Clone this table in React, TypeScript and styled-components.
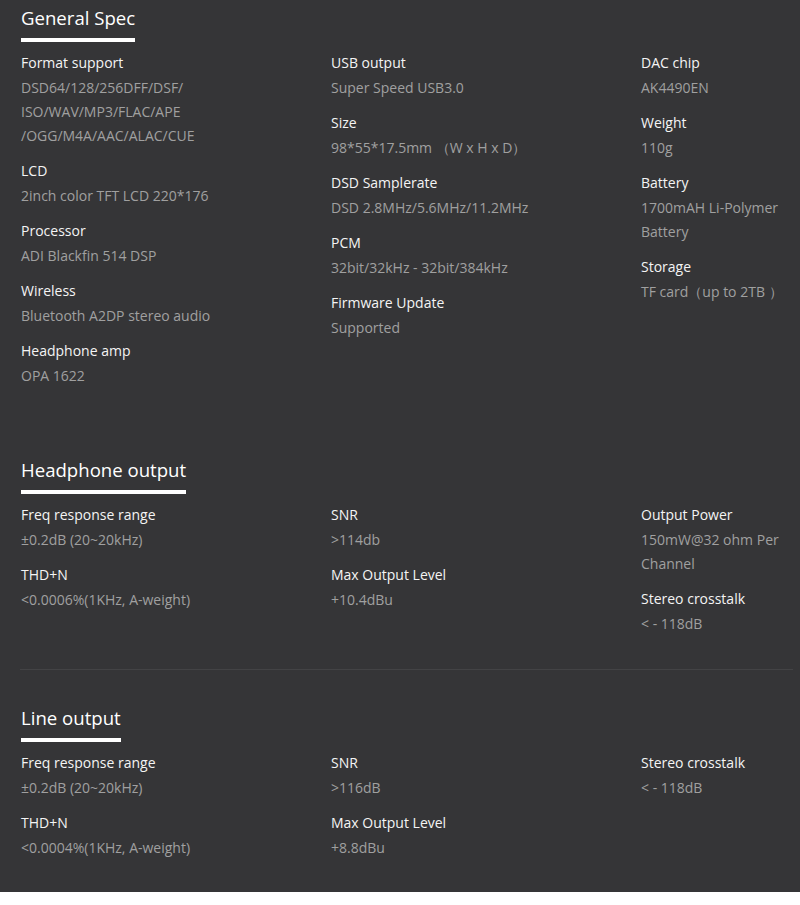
import React from "react";
import styled, { createGlobalStyle } from "styled-components";

type Spec = { label: string; value: string[] };
type Section = { title: string; columns: Spec[][]; divider?: boolean; gapTop: number };

const sections: Section[] = [
  {
    title: "General Spec",
    gapTop: 6,
    columns: [
      [
        { label: "Format support", value: ["DSD64/128/256DFF/DSF/", "ISO/WAV/MP3/FLAC/APE", "/OGG/M4A/AAC/ALAC/CUE"] },
        { label: "LCD", value: ["2inch color TFT LCD 220*176"] },
        { label: "Processor", value: ["ADI Blackfin 514 DSP"] },
        { label: "Wireless", value: ["Bluetooth A2DP stereo audio"] },
        { label: "Headphone amp", value: ["OPA 1622"] },
      ],
      [
        { label: "USB output", value: ["Super Speed USB3.0"] },
        { label: "Size", value: ["98*55*17.5mm （W x H x D）"] },
        { label: "DSD Samplerate", value: ["DSD 2.8MHz/5.6MHz/11.2MHz"] },
        { label: "PCM", value: ["32bit/32kHz - 32bit/384kHz"] },
        { label: "Firmware Update", value: ["Supported"] },
      ],
      [
        { label: "DAC chip", value: ["AK4490EN"] },
        { label: "Weight", value: ["110g"] },
        { label: "Battery", value: ["1700mAH Li-Polymer", "Battery"] },
        { label: "Storage", value: ["TF card（up to 2TB ）"] },
      ],
    ],
  },
  {
    title: "Headphone output",
    gapTop: 60,
    divider: true,
    columns: [
      [
        { label: "Freq response range", value: ["±0.2dB (20~20kHz)"] },
        { label: "THD+N", value: ["<0.0006%(1KHz, A-weight)"] },
      ],
      [
        { label: "SNR", value: [">114db"] },
        { label: "Max Output Level", value: ["+10.4dBu"] },
      ],
      [
        { label: "Output Power", value: ["150mW@32 ohm Per", "Channel"] },
        { label: "Stereo crosstalk", value: ["< - 118dB"] },
      ],
    ],
  },
  {
    title: "Line output",
    gapTop: 36,
    columns: [
      [
        { label: "Freq response range", value: ["±0.2dB (20~20kHz)"] },
        { label: "THD+N", value: ["<0.0004%(1KHz, A-weight)"] },
      ],
      [
        { label: "SNR", value: [">116dB"] },
        { label: "Max Output Level", value: ["+8.8dBu"] },
      ],
      [{ label: "Stereo crosstalk", value: ["< - 118dB"] }],
    ],
  },
];

const App = () => {
  return (
    <>
      <GlobalStyle />
      <Panel>
        {sections.map((section) => (
          <React.Fragment key={section.title}>
            <Block $gapTop={section.gapTop}>
              <Title>{section.title}</Title>
              <Grid>
                {section.columns.map((col, i) => (
                  <Column key={i}>
                    {col.map((spec) => (
                      <Item key={spec.label}>
                        <Label>{spec.label}</Label>
                        {spec.value.map((line) => (
                          <Value key={line}>{line}</Value>
                        ))}
                      </Item>
                    ))}
                  </Column>
                ))}
              </Grid>
            </Block>
            {section.divider && <Divider />}
          </React.Fragment>
        ))}
      </Panel>
    </>
  );
};

const GlobalStyle = createGlobalStyle`
  body {
    margin: 0;
    background: #ffffff;
    font-family: "Open Sans", "Liberation Sans", sans-serif;
  }
`;

const Panel = styled.div`
  width: 800px;
  height: 892px;
  background: #353537;
  box-sizing: border-box;
  overflow: hidden;
`;

const Block = styled.section<{ $gapTop: number }>`
  padding: ${(p) => p.$gapTop}px 0 0 21px;
`;

const Title = styled.h2`
  display: inline-block;
  margin: 0 0 8px;
  padding-bottom: 8px;
  border-bottom: 4px solid #ffffff;
  font-size: 18.6px;
  line-height: 24px;
  font-weight: 400;
  color: #ffffff;
`;

const Grid = styled.div`
  display: grid;
  grid-template-columns: repeat(3, 310px);
`;

const Column = styled.div`
  display: flex;
  flex-direction: column;
`;

const Item = styled.div`
  margin-bottom: 10px;
`;

const Label = styled.div`
  font-size: 14px;
  line-height: 26px;
  color: #f4f4f4;
`;

const Value = styled.div`
  font-size: 14px;
  line-height: 24px;
  color: #a0a0a0;
`;

const Divider = styled.hr`
  margin: 23px 7px 0 20px;
  border: 0;
  border-top: 1px solid #434345;
`;

export default App;
